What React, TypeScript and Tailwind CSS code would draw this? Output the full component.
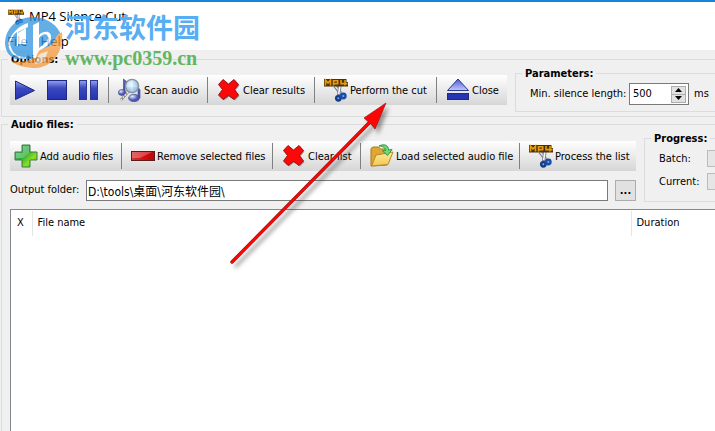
import type { ReactNode } from 'react';

function PlayIcon() {
  return (
    <svg width="22" height="24" viewBox="0 0 22 24">
      <path d="M1.5 3 L20.5 12.5 L1.5 21.5 Z" fill="url(#blue)" stroke="#1c2a86" />
    </svg>
  );
}

function StopIcon() {
  return (
    <svg width="22" height="24" viewBox="0 0 22 24">
      <rect x="1.5" y="2.5" width="19" height="19" fill="url(#blue)" stroke="#1c2a86" />
    </svg>
  );
}

function PauseIcon() {
  return (
    <svg width="22" height="24" viewBox="0 0 22 24">
      <rect x="1.5" y="2.5" width="7" height="19" fill="url(#blue)" stroke="#2a388f" />
      <rect x="12.5" y="2.5" width="7" height="19" fill="url(#blue)" stroke="#2a388f" />
    </svg>
  );
}

function EjectIcon() {
  return (
    <svg width="24" height="24" viewBox="0 0 24 24">
      <path d="M12 1 L22.5 12.5 H1.5 Z" fill="url(#blueLight)" stroke="#2a388f" />
      <rect x="1.5" y="15.5" width="21" height="6" fill="#2634b4" stroke="#1c2a86" />
    </svg>
  );
}

function ScanIcon() {
  return (
    <svg width="24" height="24" viewBox="0 0 24 24">
      <path d="M5.5 15 V1 L9 4 V7 L7 6 V15" fill="#5360b0" stroke="#333d80" strokeWidth=".6" />
      <path d="M20 20 V9 L22 12 V20" fill="#5360b0" stroke="#333d80" strokeWidth=".6" />
      <ellipse cx="4" cy="14.5" rx="3.7" ry="3" fill="url(#note)" stroke="#3c468c" strokeWidth=".6" />
      <ellipse cx="16" cy="20" rx="5.5" ry="3.7" fill="url(#note)" stroke="#3c468c" strokeWidth=".6" />
      <path d="M10 14 L3 22" stroke="#777" strokeWidth="2.6" />
      <path d="M10 14 L3 22" stroke="#eee" strokeWidth="1.2" strokeDasharray="2 1" />
      <circle cx="14" cy="8" r="6.6" fill="url(#lens)" stroke="#8a8f9c" strokeWidth="1.4" />
      <path d="M9.5 8 H18.5 M14 3 V13" stroke="#fff" strokeWidth=".8" opacity=".6" />
    </svg>
  );
}

function CrossIcon() {
  return (
    <svg width="24" height="24" viewBox="0 0 24 24">
      <path
        d="M6 1.5 L11.5 6 L17 1.5 L21.5 6.5 L17.5 11.5 L21.5 17 L17 21.5 L11.5 17.5 L6 21.5 L1.5 17 L5.5 11.5 L1.5 6.5 Z"
        fill="#555"
        opacity=".5"
        transform="translate(1 1)"
      />
      <path
        d="M6 1.5 L11.5 6 L17 1.5 L21.5 6.5 L17.5 11.5 L21.5 17 L17 21.5 L11.5 17.5 L6 21.5 L1.5 17 L5.5 11.5 L1.5 6.5 Z"
        fill="#fd0808"
        stroke="#8c0e0e"
        strokeWidth=".9"
        strokeLinejoin="round"
      />
    </svg>
  );
}

function Mp4Icon({ size = 24 }: { size?: number }) {
  return (
    <svg width={size} height={size} viewBox="0 0 24 24">
      <g fill="none">
        <path d="M11 8 L18 17" stroke="#6a6f7c" strokeWidth="3.6" />
        <path d="M11 8 L17.5 16" stroke="#dfe2ea" strokeWidth="1.8" />
        <path d="M16 7 L14.5 18" stroke="#80879a" strokeWidth="3.4" />
        <path d="M16 7 L14.7 16" stroke="#f4f5f8" strokeWidth="1.6" />
        <circle cx="14.3" cy="20.3" r="2.2" stroke="#123c8a" strokeWidth="2.4" fill="#7fa8e0" />
        <circle cx="19.3" cy="18" r="2.2" stroke="#1a4da8" strokeWidth="2.4" fill="#7fa8e0" />
        <path d="M0 1 H15.5 V1 H22.5 V4 H24 V8.5 H0 Z" fill="#4a3208" />
        <path d="M1.5 7.5 V2 L4 5 L6.500 2 V7.5" stroke="#eb9c0c" strokeWidth="1.6" />
        <path d="M9.5 7.5 V2.8 H13.7 V5.6 H9.5" stroke="#eb9c0c" strokeWidth="1.6" />
        <path d="M17 2 V5.6 H23.5 M21 2 V7.5" stroke="#eb9c0c" strokeWidth="1.6" />
      </g>
    </svg>
  );
}

function PlusIcon() {
  return (
    <svg width="24" height="24" viewBox="0 0 24 24">
      <path d="M8 1 H16 V8 H23 V16 H16 V23 H8 V16 H1 V8 H8 Z" fill="url(#green)" stroke="#3c7d46" />
      <path d="M9 2 H15 V9 L9 14 H2 V9 H9 Z" fill="#fff" opacity=".25" />
    </svg>
  );
}

function MinusIcon() {
  return (
    <svg width="24" height="24" viewBox="0 0 24 24">
      <rect x=".5" y="7.5" width="23" height="9" fill="url(#red)" stroke="#5c1c1c" />
      <path d="M1 8 H21 L9 14 H1 Z" fill="#fff" opacity=".25" />
    </svg>
  );
}

function FolderIcon() {
  return (
    <svg width="24" height="24" viewBox="0 0 24 24">
      <path d="M1 22 V4.5 L3 3 H8.5 L10.5 5 H18 V9 H21 L17 21 Z" fill="#e0a832" stroke="#a8761b" strokeLinejoin="round" />
      <path d="M1.5 22 L6 11 L12 10 L23 8 L18 20.5 Z" fill="url(#folder)" stroke="#b8872b" strokeLinejoin="round" />
      <path d="M9 2 C14 -.5 18.5 1 18.5 6 L22 5.5 L17.5 11.5 L12.5 7 L15.5 6.5 C15.5 3.5 13 2.5 9 2 Z" fill="#6ddb73" stroke="#2b8a3d" strokeWidth=".9" />
    </svg>
  );
}

function Gradients() {
  return (
    <svg className="absolute size-0" aria-hidden="true">
      <defs>
        <linearGradient id="blue" x1="0" y1="0" x2="0" y2="1">
          <stop offset="0" stopColor="#98a2ec" />
          <stop offset=".4" stopColor="#3a49c0" />
          <stop offset="1" stopColor="#2431b4" />
        </linearGradient>
        <linearGradient id="blueLight" x1="0" y1="0" x2="0" y2="1">
          <stop offset="0" stopColor="#4d5bd0" />
          <stop offset="1" stopColor="#c3c9fa" />
        </linearGradient>
        <linearGradient id="green" x1="0" y1="0" x2="1" y2="1">
          <stop offset="0" stopColor="#5fc27a" />
          <stop offset=".45" stopColor="#2fae3c" />
          <stop offset=".7" stopColor="#8be01e" />
          <stop offset="1" stopColor="#39b52a" />
        </linearGradient>
        <linearGradient id="red" x1="0" y1="0" x2="1" y2="0">
          <stop offset="0" stopColor="#cf3a3a" />
          <stop offset=".5" stopColor="#d80f0f" />
          <stop offset="1" stopColor="#b80808" />
        </linearGradient>
        <linearGradient id="folder" x1="0" y1="0" x2="0" y2="1">
          <stop offset="0" stopColor="#fdeb9c" />
          <stop offset="1" stopColor="#f3c64f" />
        </linearGradient>
        <radialGradient id="note" cx=".35" cy=".3">
          <stop offset="0" stopColor="#e8ebff" />
          <stop offset="1" stopColor="#4653b4" />
        </radialGradient>
        <radialGradient id="lens" cx=".4" cy=".35">
          <stop offset="0" stopColor="#eefaff" />
          <stop offset="1" stopColor="#9cc8ea" />
        </radialGradient>
      </defs>
    </svg>
  );
}

// group box whose title sits on the top border
function Group({ title, className = '', children }: { title: string; className?: string; children?: ReactNode }) {
  return (
    <section className={`mt-[7px] flex min-w-0 flex-col border border-r-0 border-[#dcdcdc] ${className}`}>
      <h2 className="-mt-[8px] ml-[6px] h-[14px] self-start bg-[#f0f0f0] px-[3px] text-[11px] leading-[16px] font-bold whitespace-nowrap">
        {title}
      </h2>
      {children}
    </section>
  );
}

function ToolButton({ icon, label, className }: { icon: ReactNode; label: string; className: string }) {
  return (
    <button className={`flex h-[30px] shrink-0 items-center gap-[2px] whitespace-nowrap ${className}`}>
      <span className="shrink-0">{icon}</span>
      <span className="pt-[2px]">{label}</span>
    </button>
  );
}

function Separator() {
  return <span className="h-[26px] w-px shrink-0 bg-[#808080]" />;
}

function Toolbar({ className = '', children }: { className?: string; children: ReactNode }) {
  return (
    <div className={`flex h-[30px] shrink-0 items-center bg-linear-to-b from-white to-[#d6d6d6] ${className}`}>
      {children}
    </div>
  );
}

function Watermark() {
  return (
    <div className="pointer-events-none absolute top-[10px] left-[4px] flex items-start">
      <svg width="60" height="60" viewBox="0 0 60 60">
        <g opacity=".75">
          <path d="M1 32 C2 16 16 6 31 7 C44 8 54 16 57 25 C58 33 54 40 48 46 L30 49 L12 49 C4 46 1 40 1 32 Z" fill="#2f93df" />
          <path d="M7 51 C16 53 27 52 32 45 C36 37 43 39 48 34 C52 30 51 25 58 22 C60 40 50 57 32 58 C22 58 13 56 7 51 Z" fill="#f59a3c" />
          <path d="M4 33 C8 23 14 16 24 13 L24 17 L14 22 V36 H22 L22 49 C12 49 5 43 4 33 Z" fill="#fff" />
          <path d="M6 33 C8 27 10 24 13 22 V36 H22 V47 C13 48 7 42 6 33 Z" fill="#2f93df" />
          <path d="M14 23 L22 18 V34 H14 Z" fill="#fff" />
          <path d="M29 15 L35 12 V25 C39 21 47 20 47 27 C47 34 41 38 36 40 C34 42 33 44 32 48 H29 Z" fill="#fff" />
          <path d="M35 28 C39 23 44 23 44 28 C43 33 38 35 35 38 Z" fill="#2f93df" />
          <path d="M34 46 C37 42 40 43 44 41 L40 52 L31 54 Z" fill="#fff" opacity=".7" />
        </g>
      </svg>
      <div className="ml-[1px] whitespace-nowrap">
        <p className="pt-[1px] font-['Noto_Sans_CJK_SC',sans-serif] text-[27px] leading-[32px] font-bold text-[#57aef3]">河东软件园</p>
        <p className="font-['Liberation_Serif',serif] text-[20px] leading-[30px] font-bold text-[#61b661]">www.pc0359.cn</p>
      </div>
    </div>
  );
}

function Arrow() {
  return (
    <svg className="pointer-events-none absolute top-[98px] left-[224px] overflow-visible" width="170" height="170" viewBox="0 0 170 170">
      <g className="blur-[2px]" opacity=".5" transform="translate(3 4)">
        <path d="M8 165 L148 23" stroke="#333" strokeWidth="3" />
        <path d="M162 5 L151 33 L148 23 L139 19 Z" fill="#333" />
      </g>
      <path d="M8 164 L146 24" stroke="#8e1616" strokeWidth="3.4" strokeLinecap="round" />
      <path d="M162 5 L151 31 L147 26 L140 20 Z" fill="#fe0505" stroke="#9c1414" strokeWidth=".7" />
      <path d="M8 164 L148 22" stroke="#fe0505" strokeWidth="2.4" strokeLinecap="round" />
    </svg>
  );
}

export default function App() {
  return (
    <div className="relative flex min-h-screen flex-col overflow-hidden bg-[#f0f0f0] font-['DejaVu_Sans_Condensed','DejaVu_Sans','Noto_Sans_CJK_SC',sans-serif] text-[11px] text-black">
      <Gradients />
      <header className="border-t-2 border-[#1883d7] bg-white font-['Open_Sans',sans-serif] text-[13px]">
        <div className="flex h-[30px] items-center gap-[5px] pl-[8px]">
          <Mp4Icon size={16} />
          <h1>MP4 Silence Cut</h1>
        </div>
        <nav className="flex h-[18px] items-center gap-[13px] pt-[2px] pl-[7px]">
          <button>File</button>
          <button>Help</button>
        </nav>
      </header>

      <main className="flex grow flex-col pt-[2px] pl-[1px]">
        <Group title="Options:" className="pb-[4px]">
          <div className="flex items-start gap-[8px] pl-[8px]">
            <Toolbar className="mt-[9px]">
              <div className="flex w-[98px] items-center gap-[10px] pl-[4px]">
                <button aria-label="Play"><PlayIcon /></button>
                <button aria-label="Stop"><StopIcon /></button>
                <button aria-label="Pause"><PauseIcon /></button>
              </div>
              <Separator />
              <ToolButton className="w-[98px] pl-[9px]" icon={<ScanIcon />} label="Scan audio" />
              <Separator />
              <ToolButton className="w-[106px] pl-[9px]" icon={<CrossIcon />} label="Clear results" />
              <Separator />
              <ToolButton className="w-[121px] pl-[9px]" icon={<Mp4Icon />} label="Perform the cut" />
              <Separator />
              <ToolButton className="w-[70px] pl-[9px]" icon={<EjectIcon />} label="Close" />
            </Toolbar>
            <Group title="Parameters:" className="grow">
              <div className="flex h-[31px] items-start gap-[5px] pt-[3px] pl-[14px] whitespace-nowrap">
                <label htmlFor="silence" className="w-[94px] leading-[22px]">Min. silence length:</label>
                <div className="flex h-[22px] w-[60px] items-center border border-[#7a7a7a] bg-white pr-[3px]">
                  <input id="silence" defaultValue="500" className="w-0 grow pl-[3px] outline-none" />
                  <div className="flex flex-col gap-px">
                    <button aria-label="Increase" className="flex h-[7px] w-[13px] items-center justify-center bg-[#e1e1e1] outline outline-[#adadad]">
                      <svg width="7" height="4" viewBox="0 0 7 4"><path d="M0 4 L3.5 0 L7 4 Z" /></svg>
                    </button>
                    <button aria-label="Decrease" className="flex h-[7px] w-[13px] items-center justify-center bg-[#e1e1e1] outline outline-[#adadad]">
                      <svg width="7" height="4" viewBox="0 0 7 4"><path d="M0 0 L3.5 4 L7 0 Z" /></svg>
                    </button>
                  </div>
                </div>
                <span className="leading-[22px]">ms</span>
              </div>
            </Group>
          </div>
        </Group>

        <Group title="Audio files:" className="grow border-b-0">
          <div className="flex items-start gap-[8px] pl-[8px]">
            <div className="shrink-0">
              <Toolbar className="mt-[10px]">
                <ToolButton className="w-[111px] pl-[4px]" icon={<PlusIcon />} label="Add audio files" />
                <Separator />
                <ToolButton className="w-[150px] pl-[9px]" icon={<MinusIcon />} label="Remove selected files" />
                <Separator />
                <ToolButton className="w-[87px] pl-[9px]" icon={<CrossIcon />} label="Clear list" />
                <Separator />
                <ToolButton className="w-[158px] pl-[9px]" icon={<FolderIcon />} label="Load selected audio file" />
                <Separator />
                <ToolButton className="w-[116px] pl-[9px]" icon={<Mp4Icon />} label="Process the list" />
              </Toolbar>
              <div className="flex items-center pt-[9px]">
                <label htmlFor="output" className="w-[76px] whitespace-nowrap">Output folder:</label>
                <input
                  id="output"
                  defaultValue="D:\tools\桌面\河东软件园\"
                  className="h-[21px] w-0 grow border border-[#7a7a7a] bg-white px-px text-[12px] outline-none"
                />
                <button aria-label="Browse" className="ml-[7px] h-[21px] w-[21px] border border-[#adadad] bg-[#e1e1e1] pt-[2px] font-bold">
                  ...
                </button>
              </div>
            </div>
            <Group title="Progress:" className="grow">
              <div className="flex flex-col gap-[6px] pt-[5px] pb-[11px] pl-[14px]">
                <div className="flex h-[17px] items-center">
                  <span className="w-[48px] pt-[2px]">Batch:</span>
                  <div role="progressbar" aria-label="Batch" className="h-[17px] grow border border-r-0 border-[#bcbcbc] bg-[#e6e6e6]" />
                </div>
                <div className="flex h-[17px] items-center">
                  <span className="w-[48px] pt-[2px]">Current:</span>
                  <div role="progressbar" aria-label="Current" className="h-[17px] grow border border-r-0 border-[#bcbcbc] bg-[#e6e6e6]" />
                </div>
              </div>
            </Group>
          </div>
          <div className="mt-[7px] ml-[8px] grow border-t border-l border-[#828790] bg-white pt-px">
            <table className="w-full table-fixed text-left">
              <thead>
                <tr className="h-[25px]">
                  <th className="w-[21px] border-r border-[#e5e5e5] pl-[6px] font-normal">X</th>
                  <th className="border-r border-[#e5e5e5] pl-[5px] font-normal">File name</th>
                  <th className="w-[84px] pl-[5px] font-normal">Duration</th>
                </tr>
              </thead>
            </table>
          </div>
        </Group>
      </main>

      <Watermark />
      <Arrow />
    </div>
  );
}
